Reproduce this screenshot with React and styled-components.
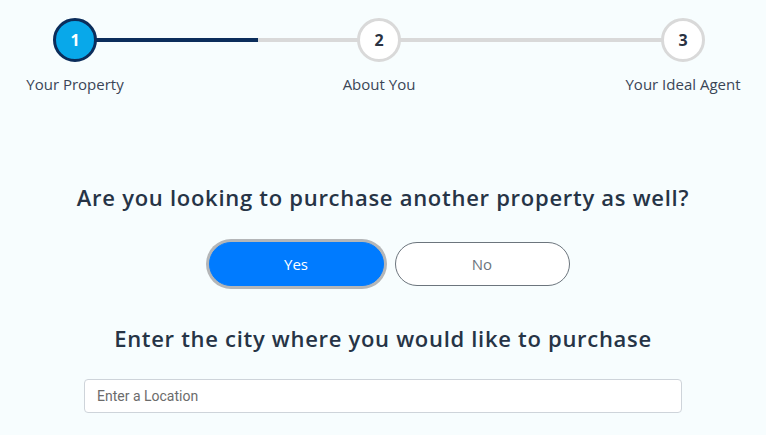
import React from "react";
import styled, { createGlobalStyle } from "styled-components";

const Global = createGlobalStyle`
  html, body { margin: 0; padding: 0; background: #f7fdfe; }
  body { font-family: "Open Sans", Lato, sans-serif; color: #263446; }
  * { box-sizing: border-box; }
`;

const Page = styled.div`
  padding-top: 18px;
  display: flex;
  flex-direction: column;
  align-items: center;
`;

const Stepper = styled.div`
  position: relative;
  align-self: flex-start;
  width: 758px;
  display: flex;
  justify-content: space-between;
`;

const Track = styled.div`
  position: absolute;
  left: 75px;
  right: 76px;
  top: 20px;
  height: 4px;
  background: #d9d9d9;
`;

const Progress = styled.div`
  height: 100%;
  background: #0b2d5b;
`;

const Step = styled.div`
  position: relative;
  width: 150px;
  display: flex;
  flex-direction: column;
  align-items: center;
`;

const Circle = styled.div`
  width: 44px;
  height: 44px;
  border-radius: 50%;
  border: 3px solid ${(p) => (p.$active ? "#0b2d5b" : "#d9d9d9")};
  background: ${(p) => (p.$active ? "#08a8ea" : "#ffffff")};
  color: ${(p) => (p.$active ? "#ffffff" : "#2a3342")};
  display: flex;
  align-items: center;
  justify-content: center;
  font-family: "Open Sans", sans-serif;
  font-weight: 700;
  font-size: 16px;
`;

const StepLabel = styled.div`
  margin-top: 12px;
  font-size: 15px;
  line-height: 20px;
  color: #3a4556;
  white-space: nowrap;
`;

const Question = styled.h2`
  margin: 89px 0 0;
  font-size: 22px;
  line-height: 29px;
  font-weight: 600;
  letter-spacing: 0.72px;
  color: #263446;
`;

const Choices = styled.div`
  margin-top: 30px;
  padding-left: 12px;
  display: flex;
  gap: 11px;
`;

const Choice = styled.button`
  width: 175px;
  height: 44px;
  border-radius: 22px;
  font-family: "Open Sans", sans-serif;
  font-size: 15px;
  font-weight: 400;
  cursor: pointer;
  border: 1px solid ${(p) => (p.$selected ? "#007bff" : "#6c757d")};
  background: ${(p) => (p.$selected ? "#007bff" : "#ffffff")};
  color: ${(p) => (p.$selected ? "#ffffff" : "#6c757d")};
  box-shadow: ${(p) => (p.$selected ? "0 0 0 3px #b4b6b8" : "none")};
`;

const SubQuestion = styled.h2`
  margin: 38px 0 0;
  font-size: 22px;
  line-height: 29px;
  font-weight: 600;
  letter-spacing: 0.7px;
  color: #263446;
`;

const LocationInput = styled.input`
  margin-top: 26px;
  width: 598px;
  height: 34px;
  border: 1px solid #ced4da;
  border-radius: 4px;
  background: #ffffff;
  padding: 0 12px;
  font-family: Roboto, sans-serif;
  font-size: 14px;
  color: #333;
  &::placeholder { color: #6b6b6b; }
`;

const steps = [
  { n: 1, label: "Your Property" },
  { n: 2, label: "About You" },
  { n: 3, label: "Your Ideal Agent" },
];

export default function App() {
  return (
    <>
      <Global />
      <Page>
        <Stepper>
          <Track>
            <Progress style={{ width: "30.1%" }} />
          </Track>
          {steps.map((s) => (
            <Step key={s.n}>
              <Circle $active={s.n === 1}>{s.n}</Circle>
              <StepLabel>{s.label}</StepLabel>
            </Step>
          ))}
        </Stepper>
        <Question>Are you looking to purchase another property as well?</Question>
        <Choices>
          <Choice $selected>Yes</Choice>
          <Choice>No</Choice>
        </Choices>
        <SubQuestion>Enter the city where you would like to purchase</SubQuestion>
        <LocationInput placeholder="Enter a Location" />
      </Page>
    </>
  );
}
